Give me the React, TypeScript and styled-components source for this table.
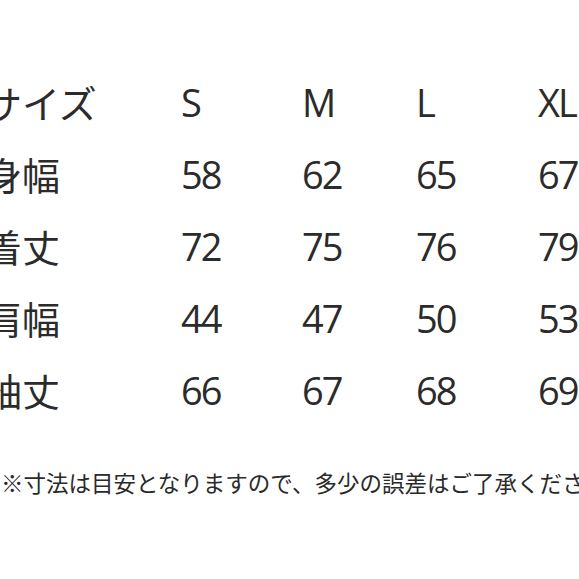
import React from 'react';
import styled, { createGlobalStyle } from 'styled-components';

const GlobalStyle = createGlobalStyle`
    html, body {
        margin: 0;
        padding: 0;
        background: #ffffff;
    }
`;

const sizes = ['S', 'M', 'L', 'XL'];

const rows = [
    { label: '身幅', values: ['58', '62', '65', '67'] },
    { label: '着丈', values: ['72', '75', '76', '79'] },
    { label: '肩幅', values: ['44', '47', '50', '53'] },
    { label: '袖丈', values: ['66', '67', '68', '69'] },
];

const App: React.FC = () => {
    return (
    <>
        <GlobalStyle />
        <Page>
            <Chart>
                <Label>サイズ</Label>
                {sizes.map((s) => (
                    <Cell key={s}>{s}</Cell>
                ))}
                {rows.map((row) => (
                    <React.Fragment key={row.label}>
                        <Label>{row.label}</Label>
                        {row.values.map((v, i) => (
                            <Cell key={i}>{v}</Cell>
                        ))}
                    </React.Fragment>
                ))}
            </Chart>
            <Note>※寸法は目安となりますので、多少の誤差はご了承くださ い。</Note>
        </Page>
    </>
    );
};

export default App;

const Page = styled.div`
    width: 579px;
    height: 579px;
    overflow: hidden;
    background: #fff;
    color: #2b2b2b;
    font-family: "Open Sans", "Noto Sans CJK JP", sans-serif;
    padding-top: 66px;
    box-sizing: border-box;
`;

const Chart = styled.div`
    display: grid;
    grid-template-columns: 197px 121px 114px 122px 120px;
    grid-auto-rows: 72px;
    margin-left: -16px;
    width: max-content;
`;

const Label = styled.div`
    font-family: "Noto Sans CJK JP", sans-serif;
    font-size: 38px;
    line-height: 72px;
    white-space: nowrap;
`;

const Cell = styled.div`
    font-size: 38px;
    letter-spacing: -2px;
    line-height: 72px;
    white-space: nowrap;
`;

const Note = styled.p`
    margin: 41px 0 0 1px;
    font-family: "Noto Sans CJK JP", sans-serif;
    font-size: 22.5px;
    line-height: 30px;
    white-space: nowrap;
    color: #2a2a2a;
`;
